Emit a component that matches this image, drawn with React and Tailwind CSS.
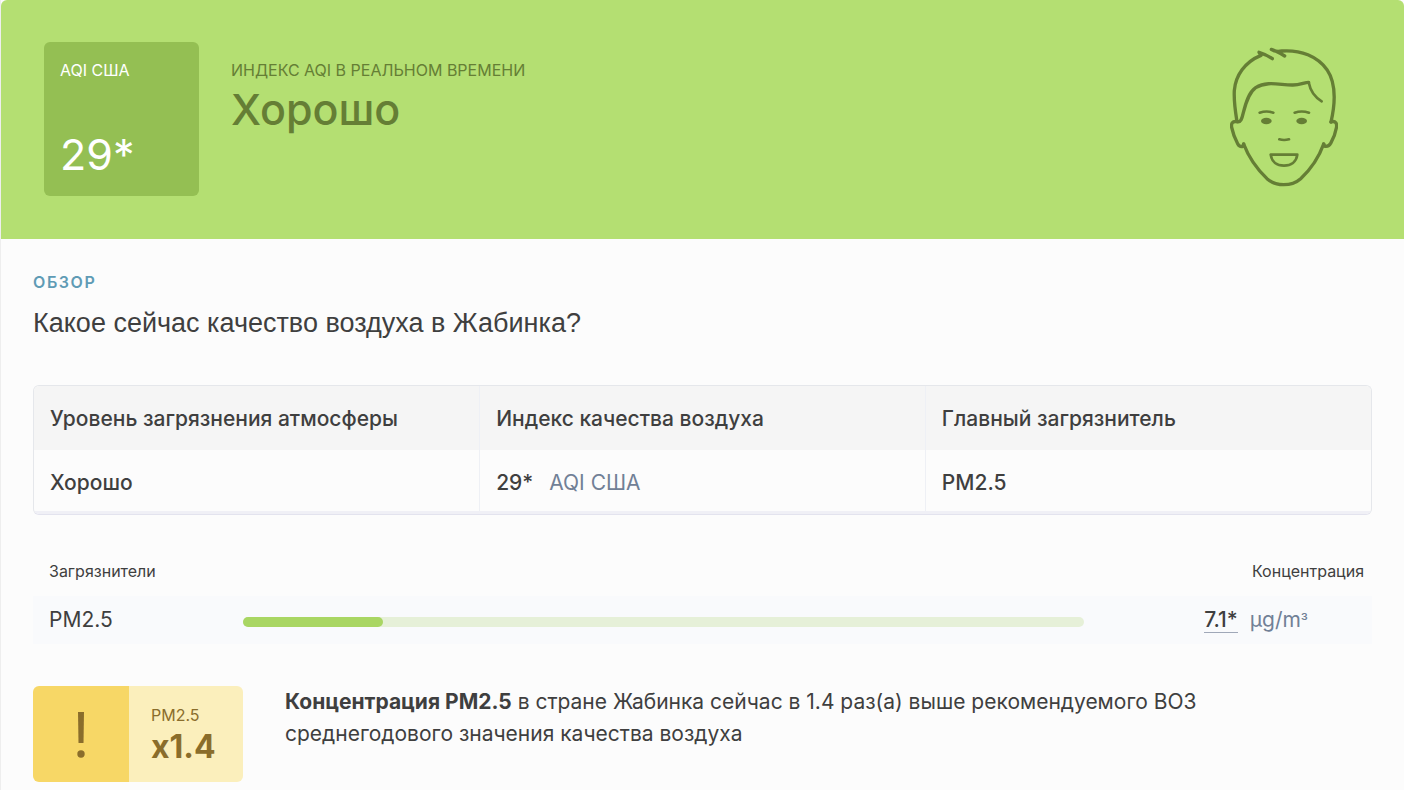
const pollutants = [{ name: "PM2.5", value: "7.1*", level: 140, max: 841 }];

function FaceIcon() {
  return (
    <svg
      viewBox="60 45 324 426"
      className="w-[108px] h-[142px] shrink-0"
      fill="none"
      stroke="#657e35"
      strokeWidth="10"
      strokeLinecap="round"
      strokeLinejoin="round"
      aria-hidden="true"
    >
      {/* hair */}
      <path d="M187 86 C176 78 163 72 147 67 L153 76 C104 96 77 137 73 181 C71 216 76 244 81 275 C92 278 96 266 100 248 C108 216 117 187 137 173 C172 151 213 166 249 165 C270 165 284 157 296 157" />
      <path d="M224 78 C211 70 198 62 184 58 C193 65 201 66 216 63 C272 59 322 79 351 119 C376 156 378 211 363 276" />
      <path d="M296 157 C301 183 313 201 335 214" strokeWidth="8" />
      {/* ears */}
      <path d="M81 275 C67 272 63 281 65 292 C69 312 76 328 83 341 C87 349 94 350 99 349 L101 342" />
      <path d="M363 276 C377 271 382 281 379 294 C376 312 369 328 362 340 C358 348 352 350 345 349 L341 342" />
      {/* jaw */}
      <path d="M101 342 C116 382 144 420 171 446 C188 461 202 464 221 464 C240 464 255 461 272 446 C300 420 326 384 341 342" />
      {/* eyes, nose, mouth */}
      <path d="M149 248 Q170 241 190 248 M254 248 Q275 241 297 248 M208 328 Q222 332 237 328" strokeWidth="8" />
      <ellipse cx="169" cy="273" rx="16" ry="10" fill="#657e35" stroke="none" />
      <ellipse cx="275" cy="273" rx="16" ry="10" fill="#657e35" stroke="none" />
      <path d="M182 374 H262 C259 396 243 407 222 407 C201 407 185 396 182 374 Z" strokeWidth="8" />
    </svg>
  );
}

export default function App() {
  return (
    <main className="min-h-screen bg-[#fcfcfc] border-l border-[#eeeeee] text-[#3f3f3f] font-['Inter','Liberation_Sans',sans-serif]">
      <header className="flex items-start bg-[#b4df72] rounded-t-md pl-[43px] pr-[66px] pt-[42px] pb-[43px]">
        <div className="w-[155px] h-[154px] shrink-0 rounded-md bg-[#94bf53] text-white p-4 flex flex-col justify-between">
          <p className="text-base leading-6">AQI США</p>
          <p className="text-[43px] leading-[52px]">29*</p>
        </div>
        <div className="ml-8 pt-4 flex-1 text-[#657e35]">
          <p className="text-base leading-6">ИНДЕКС AQI В РЕАЛЬНОМ ВРЕМЕНИ</p>
          <p className="text-[43px] leading-[54px] font-medium">Хорошо</p>
        </div>
        <div className="pt-[3px]">
          <FaceIcon />
        </div>
      </header>

      <section className="px-8 pt-[31px] pb-2">
        <p className="text-base leading-6 font-semibold tracking-widest text-[#5f9bb5]">ОБЗОР</p>
        <h2 className="mt-[13px] text-[27px] leading-8 font-['Liberation_Sans',Arial,sans-serif]">
          Какое сейчас качество воздуха в Жабинка?
        </h2>

        {/* overview */}
        <div className="mt-[46px] rounded-md border border-[#e5e7eb] border-b-[#e3e3ee] overflow-hidden">
          <table className="w-full table-fixed text-left text-[21px] leading-8 border-b-3 border-[#f0f0f6]">
            <thead className="bg-[#f5f5f5]">
              <tr className="divide-x divide-[#eef0f5]">
                <th className="px-4 pt-[17px] pb-[15px] font-medium">Уровень загрязнения атмосферы</th>
                <th className="px-4 pt-[17px] pb-[15px] font-medium">Индекс качества воздуха</th>
                <th className="px-4 pt-[17px] pb-[15px] font-medium">Главный загрязнитель</th>
              </tr>
            </thead>
            <tbody>
              <tr className="divide-x divide-[#eef0f5]">
                <td className="px-4 pt-[17px] pb-3 font-medium">Хорошо</td>
                <td className="px-4 pt-[17px] pb-3 font-medium">
                  29*<span className="ml-4 font-normal text-[#718096]">AQI США</span>
                </td>
                <td className="px-4 pt-[17px] pb-3 font-medium">PM2.5</td>
              </tr>
            </tbody>
          </table>
        </div>

        {/* pollutants */}
        <table className="mt-11 w-full text-left">
          <thead>
            <tr className="text-base leading-6">
              <th className="w-[210px] pl-4 pb-[13px] font-normal">Загрязнители</th>
              <th className="pb-[13px]" aria-label="Уровень"></th>
              <th className="w-[288px] pr-2 pb-[13px] font-normal text-right">Концентрация</th>
            </tr>
          </thead>
          <tbody>
            {pollutants.map((p) => (
              <tr key={p.name} className="bg-[#f9fafc] h-12 text-[21px] leading-8">
                <td className="pl-4">{p.name}</td>
                <td>
                  <div className="mt-1 h-[10px] rounded-full bg-[#e6f0d8]">
                    <div
                      className="h-full rounded-full bg-[#a9d663]"
                      style={{ width: `${(p.level / p.max) * 100}%` }}
                    />
                  </div>
                </td>
                <td className="pr-16 text-right">
                  <span className="inline-block leading-6 font-medium border-b border-[#a0a8b8]">{p.value}</span>
                  <span className="ml-3 text-[#718096]">
                    µg/m<span className="text-base">³</span>
                  </span>
                </td>
              </tr>
            ))}
          </tbody>
        </table>

        {/* who guideline */}
        <div className="mt-[42px] flex items-start">
          <div className="flex w-[210px] h-24 shrink-0 rounded-md overflow-hidden text-[#8a6d2b]">
            <div className="w-24 flex items-center justify-center bg-[#f7d766]">
              <svg viewBox="0 -2 8 48" className="w-2 h-12" fill="currentColor" aria-hidden="true">
                <path d="M1 0 H7 L6.5 31 H1.5 Z" />
                <circle cx="4" cy="42" r="3.7" />
              </svg>
            </div>
            <div className="flex-1 bg-[#fbefbc] pl-[22px] pt-[17px]">
              <p className="text-base leading-6">PM2.5</p>
              <p className="text-[32px] leading-10 font-bold">x1.4</p>
            </div>
          </div>
          <p className="ml-[42px] max-w-[940px] text-[21px] leading-8">
            <strong className="font-bold">Концентрация PM2.5</strong> в стране Жабинка сейчас в 1.4 раз(а) выше
            рекомендуемого ВОЗ среднегодового значения качества воздуха
          </p>
        </div>
      </section>
    </main>
  );
}
